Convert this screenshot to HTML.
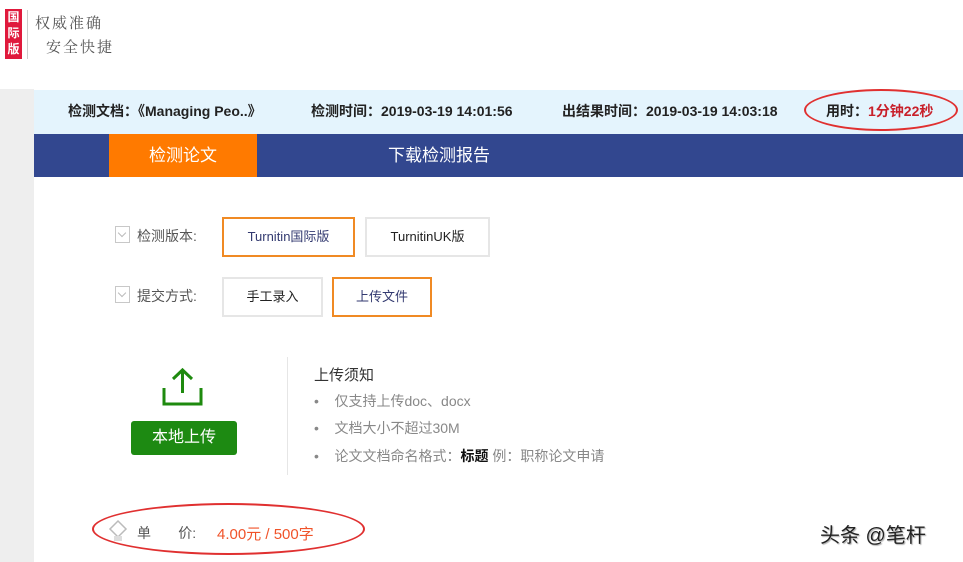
<!DOCTYPE html>
<html><head><meta charset="utf-8"><style>
*{margin:0;padding:0;box-sizing:border-box}
body{width:963px;height:562px;overflow:hidden;background:#fff;position:relative;font-family:"Liberation Sans","Microsoft YaHei","Noto Sans CJK SC",sans-serif;}
.a{position:absolute;white-space:nowrap}
.btn{position:absolute;border:2px solid #e6e6e6;background:#fff;font-size:13px;color:#222;text-align:center}
.btn.on{border-color:#f08a24;color:#333a70}
.chk{position:absolute;width:15px;height:17px;border:1px solid #c8c8c8;}
.chk:after{content:"";position:absolute;left:3px;top:3px;width:5px;height:5px;border-right:1px solid #bbb;border-bottom:1px solid #bbb;transform:rotate(45deg)}
</style></head><body>
<div class="a" style="left:5px;top:9px;width:17px;height:50px;background:#e0193c;color:#fff;font-size:12px;line-height:16px;text-align:center;font-weight:bold;white-space:normal">国<br>际<br>版</div>
<div class="a" style="left:27px;top:10px;width:1px;height:49px;background:#ccc"></div>
<div class="a" style="left:35px;top:12px;font-size:15px;color:#555;font-family:'Noto Serif CJK SC',serif;letter-spacing:2px">权威准确</div>
<div class="a" style="left:46px;top:36px;font-size:15px;color:#555;font-family:'Noto Serif CJK SC',serif;letter-spacing:2px">安全快捷</div>
<div class="a" style="left:0;top:89px;width:34px;height:473px;background:#eeeeee"></div>
<div class="a" style="left:34px;top:90px;width:929px;height:44px;background:#e4f4fd"></div>
<div class="a" style="left:68px;top:101px;font-size:14px;color:#222;font-weight:bold;line-height:20px">检测文档：《Managing Peo..》</div>
<div class="a" style="left:311px;top:101px;font-size:14px;color:#222;font-weight:bold;line-height:20px">检测时间：2019-03-19 14:01:56</div>
<div class="a" style="left:562px;top:101px;font-size:14px;color:#222;font-weight:bold;line-height:20px">出结果时间：2019-03-19 14:03:18</div>
<div class="a" style="left:826px;top:101px;font-size:14px;color:#222;font-weight:bold;line-height:20px">用时：<span style="color:#c8202a">1分钟22秒</span></div>
<div class="a" style="left:804px;top:89px;width:154px;height:42px;border:2px solid #e03030;border-radius:50%"></div>
<div class="a" style="left:34px;top:134px;width:929px;height:43px;background:#32478f"></div>
<div class="a" style="left:109px;top:134px;width:148px;height:43px;background:#ff7a00;color:#fff;font-size:17px;line-height:43px;text-align:center">检测论文</div>
<div class="a" style="left:388px;top:134px;color:#fff;font-size:17px;line-height:43px">下载检测报告</div>

<div class="chk" style="left:115px;top:226px"></div>
<div class="a" style="left:137px;top:226px;font-size:14px;color:#555">检测版本:</div>
<div class="btn on" style="left:222px;top:217px;width:133px;height:40px;line-height:36px">Turnitin国际版</div>
<div class="btn" style="left:365px;top:217px;width:125px;height:40px;line-height:36px">TurnitinUK版</div>
<div class="chk" style="left:115px;top:286px"></div>
<div class="a" style="left:137px;top:286px;font-size:14px;color:#555">提交方式:</div>
<div class="btn" style="left:222px;top:277px;width:101px;height:40px;line-height:36px">手工录入</div>
<div class="btn on" style="left:332px;top:277px;width:100px;height:40px;line-height:36px">上传文件</div>

<svg class="a" style="left:160px;top:366px" width="45" height="42" viewBox="0 0 45 42"><path d="M22.5 4V27M13 13L22.5 4L32 13M4 22V38H41V22" fill="none" stroke="#1e8a0e" stroke-width="3"/></svg>
<div class="a" style="left:131px;top:421px;width:106px;height:34px;background:#1d8a12;border-radius:3px;color:#fff;font-size:16px;line-height:34px;text-align:center">本地上传</div>
<div class="a" style="left:287px;top:357px;width:1px;height:118px;background:#e6e6e6"></div>
<div class="a" style="left:314px;top:364px;font-size:15px;color:#333">上传须知</div>
<div class="a" style="left:314px;top:391px;font-size:14px;color:#888;line-height:20px">•&nbsp;&nbsp;&nbsp;&nbsp;仅支持上传doc、docx</div>
<div class="a" style="left:314px;top:418px;font-size:14px;color:#888;line-height:20px">•&nbsp;&nbsp;&nbsp;&nbsp;文档大小不超过30M</div>
<div class="a" style="left:314px;top:446px;font-size:14px;color:#888;line-height:20px">•&nbsp;&nbsp;&nbsp;&nbsp;论文文档命名格式：<b style="color:#111">标题</b> 例：职称论文申请</div>

<svg class="a" style="left:108px;top:519px" width="20" height="24" viewBox="0 0 20 24"><path d="M10 2L18 10L10 18L2 10Z" fill="none" stroke="#bbb" stroke-width="1.5"/><rect x="6" y="17" width="8" height="5" fill="#ddd"/></svg>
<div class="a" style="left:137px;top:523px;font-size:14px;color:#555">单&nbsp;&nbsp;&nbsp;&nbsp;&nbsp;&nbsp;&nbsp;价:</div>
<div class="a" style="left:217px;top:523px;font-size:15px;color:#f0532a">4.00元 / 500字</div>
<div class="a" style="left:92px;top:503px;width:273px;height:52px;border:2px solid #e03030;border-radius:50%"></div>
<div class="a" style="left:820px;top:519px;font-size:20px;color:#222;text-shadow:1px 1px 1px #aaa">头条 @笔杆</div>
</body></html>
